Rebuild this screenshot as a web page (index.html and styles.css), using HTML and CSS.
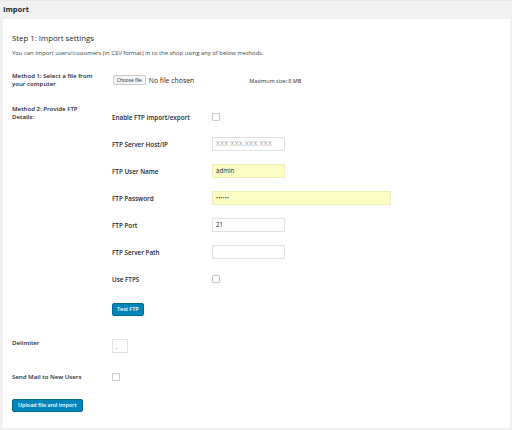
FILE: index.html
```html
<!DOCTYPE html>
<html>
<head>
<meta charset="utf-8">
<link rel="stylesheet" href="styles.css">
</head>
<body>
<div class="header">Import</div>
<div class="panel">
  <h2 class="title">Step 1: Import settings</h2>
  <p class="desc">You can import users/customers (in CSV format) in to the shop using any of below methods.</p>

  <div class="row row-m1">
    <div class="label">Method 1: Select a file from your computer</div>
    <div class="field file-field">
      <span class="file-btn">Choose file</span>
      <span class="file-none">No file chosen</span>
      <span class="max-size">Maximum size: 8 MB</span>
    </div>
  </div>

  <div class="row row-m2">
    <div class="label">Method 2: Provide FTP Details:</div>
    <div class="ftp">
      <div class="sub"><div class="sublabel">Enable FTP import/export</div><span class="check"></span></div>
      <div class="sub"><div class="sublabel">FTP Server Host/IP</div><span class="input placeholder">XXX.XXX.XXX.XXX</span></div>
      <div class="sub"><div class="sublabel">FTP User Name</div><span class="input yellow">admin</span></div>
      <div class="sub"><div class="sublabel">FTP Password</div><span class="input yellow wide">••••••</span></div>
      <div class="sub"><div class="sublabel">FTP Port</div><span class="input">21</span></div>
      <div class="sub"><div class="sublabel">FTP Server Path</div><span class="input"></span></div>
      <div class="sub"><div class="sublabel">Use FTPS</div><span class="check"></span></div>
      <div class="btn-row"><span class="btn">Test FTP</span></div>
    </div>
  </div>

  <div class="row row-delim">
    <div class="label">Delimiter</div>
    <span class="input tiny">,</span>
  </div>

  <div class="row row-mail">
    <div class="label">Send Mail to New Users</div>
    <span class="check"></span>
  </div>

  <div class="submit"><span class="btn">Upload file and import</span></div>
</div>
</body>
</html>
```
FILE: styles.css
```css
html, body {
  margin: 0;
  padding: 0;
}
body {
  width: 512px;
  height: 430px;
  background: #f1f1f1;
  font-family: "Open Sans", "Noto Sans", sans-serif;
  color: #23282d;
  overflow: hidden;
}
.header {
  height: 19px;
  box-sizing: border-box;
  border-top: 1px solid #e6e6e6;
  padding-left: 3px;
  font-size: 7.5px;
  font-weight: 700;
  line-height: 16px;
}
.panel {
  margin: 0 2px 0 3px;
  height: 409px;
  box-sizing: border-box;
  background: #fff;
  padding: 12px 9px 0 9px;
}
.title {
  margin: 0;
  font-size: 7.8px;
  font-weight: 400;
  line-height: 14px;
}
.desc {
  margin: 4px 0 0 0;
  font-size: 5.9px;
  line-height: 8px;
  color: #3c434a;
}
.row {
  display: flex;
  align-items: flex-start;
}
.label {
  width: 100px;
  flex: none;
  font-size: 6.1px;
  font-weight: 600;
  line-height: 8px;
  padding-right: 14px;
  box-sizing: border-box;
}
.row-m1 { margin-top: 15px; }
.file-field {
  display: flex;
  align-items: center;
  height: 16px;
}
.file-btn {
  display: inline-block;
  height: 10px;
  box-sizing: border-box;
  padding: 0 3px;
  border: 1px solid #c9c9c9;
  border-radius: 2px;
  background: #f6f6f6;
  font-size: 4.8px;
  line-height: 8px;
  margin-left: 1px;
}
.file-none {
  font-size: 6.9px;
  margin-left: 3px;
}
.max-size {
  font-size: 5.4px;
  margin-left: 55px;
  margin-top: 2px;
}
.row-m2 { margin-top: 17px; }
.ftp {
  display: flex;
  flex-direction: column;
  margin-top: -1.5px;
}
.sub {
  display: flex;
  align-items: center;
  height: 27px;
}
.sublabel {
  width: 100px;
  flex: none;
  font-size: 6.3px;
  font-weight: 600;
}
.check {
  display: inline-block;
  width: 8px;
  height: 8px;
  box-sizing: border-box;
  border: 1px solid #c8c8c8;
  border-radius: 1px;
  background: #fff;
}
.input {
  display: inline-block;
  width: 73px;
  height: 14px;
  box-sizing: border-box;
  border: 1px solid #e2e2e2;
  background: #fff;
  font-size: 6.2px;
  line-height: 12px;
  padding-left: 3px;
}
.input.placeholder {
  color: #9a9a9a;
  font-size: 6.4px;
  letter-spacing: 0.45px;
}
.input.yellow {
  background: #fcfdc5;
  border-color: #eeeeb8;
}
.input.wide { width: 179px; font-size: 5px; letter-spacing: 0.3px; }
.btn-row { margin-top: 1px; }
.btn {
  display: inline-block;
  height: 13px;
  box-sizing: border-box;
  padding: 0 4px;
  background: #0085ba;
  border: 1px solid #006a95;
  border-radius: 2px;
  color: #fff;
  font-size: 5.4px;
  font-weight: 600;
  line-height: 11px;
}
.row-delim { margin-top: 23px; }
.row-delim .input.tiny {
  width: 16px;
  margin-top: 0;
  padding-left: 3px;
  font-size: 6px;
  line-height: 14px;
}
.row-mail { margin-top: 20px; align-items: center; }
.submit { margin-top: 9px; }
.submit .btn { padding: 0 5px; }
```
